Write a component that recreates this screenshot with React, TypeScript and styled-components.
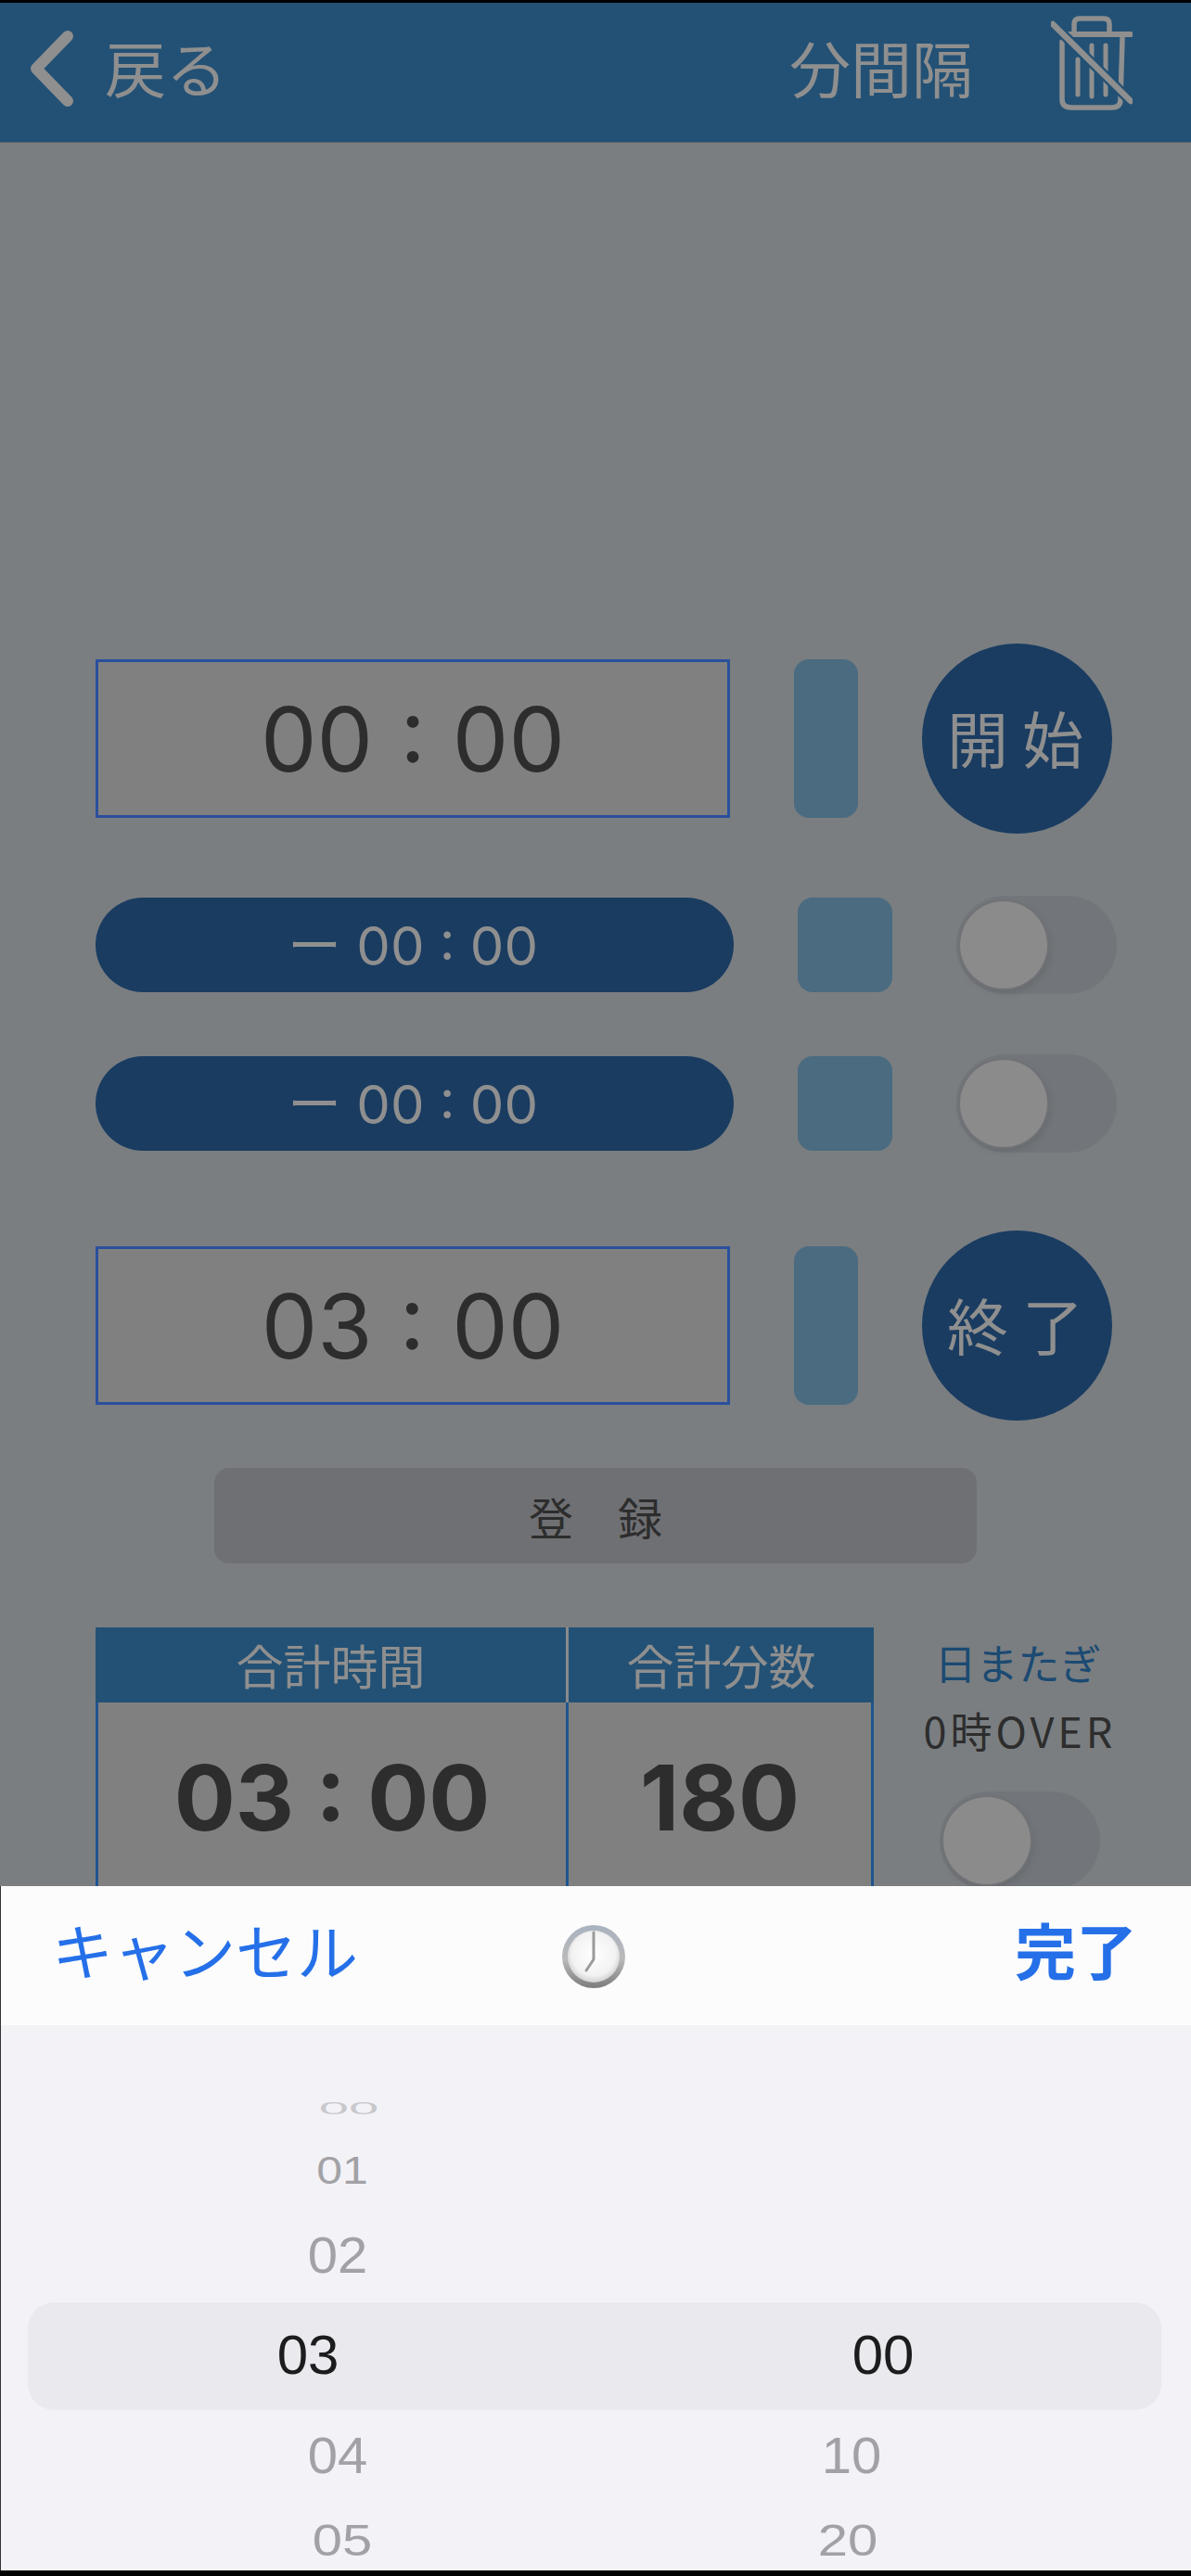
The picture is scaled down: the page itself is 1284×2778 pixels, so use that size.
import React from 'react';
import styled, { createGlobalStyle } from 'styled-components';

const GlobalStyle = createGlobalStyle`
  html, body {
    margin: 0;
    padding: 0;
    background: #000;
  }
`;

const sans = `"Liberation Sans", "Noto Sans CJK JP", sans-serif`;
const digits = `Inter, "Noto Sans CJK JP", sans-serif`;
const jp = `"Noto Sans CJK JP", "Liberation Sans", sans-serif`;

const Screen = styled.div`
  position: relative;
  width: 1284px;
  height: 2778px;
  overflow: hidden;
  background: #7a7e81;
  border-top: 3px solid #000;
  border-bottom: 6px solid #000;
  box-sizing: border-box;
`;

const NavBar = styled.header`
  height: 151px;
  box-sizing: border-box;
  padding: 0 63px 8px 33px;
  display: flex;
  align-items: center;
  justify-content: space-between;
  background: #235175;
  border-bottom: 1px solid #5e6468;
  color: #8f8f8f;
  font-family: ${jp};
`;

const NavGroup = styled.div`
  display: flex;
  align-items: center;
  gap: ${({ $gap }: { $gap: number }) => $gap}px;
`;

const NavText = styled.span`
  margin-bottom: 6px;
  font-size: 66px;
  line-height: 1;
`;

const TrashSlot = styled.div`
  display: flex;
  margin-bottom: 12px;
`;

const Content = styled.main`
  display: flex;
  flex-direction: column;
  padding: 540px 0 0 103px;
`;

const Row = styled.div<{ $top?: number; $gap: number }>`
  display: flex;
  align-items: center;
  gap: ${({ $gap }) => $gap}px;
  margin-top: ${({ $top }) => $top ?? 0}px;
`;

const TimeBox = styled.div`
  width: 684px;
  height: 171px;
  box-sizing: border-box;
  display: flex;
  align-items: center;
  justify-content: center;
  border: 3px solid #2a4f9c;
  background: #808080;
  color: #2d2d2d;
  font-family: ${digits};
  font-size: 96px;
  word-spacing: 2px;
`;

const BarButton = styled.div`
  width: 69px;
  height: 171px;
  border-radius: 16px;
  background: #4a6b80;
`;

const RoundButton = styled.div`
  width: 205px;
  height: 205px;
  box-sizing: border-box;
  padding: 0 4px 6px 0;
  border-radius: 50%;
  display: flex;
  align-items: center;
  justify-content: center;
  background: #1a3c61;
  color: #8f8f8f;
  font-family: ${jp};
  font-size: 66px;
  line-height: 1;
  white-space: pre;
`;

const Pill = styled.div`
  width: 688px;
  height: 102px;
  box-sizing: border-box;
  padding: 0 4px 6px 0;
  border-radius: 51px;
  display: flex;
  align-items: center;
  justify-content: center;
  background: #1a3c61;
  color: #8f8f8f;
  font-family: ${digits};
  font-size: 58px;
  white-space: pre;
`;

const SquareButton = styled.div`
  width: 102px;
  height: 102px;
  border-radius: 16px;
  background: #4a6b80;
`;

const ToggleTrack = styled.div`
  position: relative;
  width: 173px;
  height: 106px;
  border-radius: 53px;
  background: #72767a;
`;

const ToggleThumb = styled.div`
  position: absolute;
  left: 4px;
  top: 6px;
  width: 94px;
  height: 94px;
  border-radius: 50%;
  background: #8b8b8b;
  box-shadow: 0 0 0 2px #717276, 2px 4px 8px rgba(0, 0, 0, 0.12);
`;

const RegisterButton = styled.div`
  width: 822px;
  height: 103px;
  margin: 51px 0 0 128px;
  border-radius: 16px;
  display: flex;
  align-items: center;
  justify-content: center;
  background: #6f7073;
  color: #2d2d2d;
  font-family: ${jp};
  font-size: 48px;
`;

const Summary = styled.section`
  display: flex;
  margin-top: 69px;
`;

const Table = styled.div`
  width: 839px;
  height: 420px;
  display: grid;
  grid-template-columns: 510px 329px;
  grid-template-rows: 81px 1fr;
`;

const TableHead = styled.div`
  display: flex;
  align-items: center;
  justify-content: center;
  padding-bottom: 2px;
  box-sizing: border-box;
  background: #235175;
  border-right: 3px solid #8a8a8a;
  color: #8f8f8f;
  font-family: ${jp};
  font-size: 51px;
  &:nth-child(2) {
    border-right: 0;
  }
`;

const TableValue = styled.div<{ $left?: boolean }>`
  box-sizing: border-box;
  padding-top: 48px;
  display: flex;
  justify-content: center;
  background: #808080;
  border-left: ${({ $left }) => ($left ? '3px solid #1f5590' : '0')};
  border-right: 3px solid #1f5590;
  color: #2d2d2d;
  font-family: ${digits};
  font-size: 98px;
  font-weight: 700;
  line-height: 110px;
`;

const OverColumn = styled.div`
  width: 173px;
  margin-left: 71px;
  display: flex;
  flex-direction: column;
  align-items: center;
  font-family: ${jp};
  font-size: 45px;
  line-height: 64px;
  white-space: nowrap;
`;

const OverTitle = styled.div`
  margin: 6px 4px 0 0;
  color: #1b4a72;
`;

const OverNote = styled.div`
  margin: 9px 0 34px;
  color: #2d2d2d;
  letter-spacing: 4px;
`;

const Sheet = styled.div`
  position: absolute;
  left: 0;
  right: 0;
  top: 2031px;
  bottom: 0;
  overflow: hidden;
  border-left: 1px solid #333;
  background: #f2f2f7;
`;

const SheetBar = styled.div`
  height: 150px;
  box-sizing: border-box;
  padding: 0 58px 16px 55px;
  display: grid;
  grid-template-columns: 1fr auto 1fr;
  align-items: center;
  background: #fcfcfc;
  color: #2570e8;
  font-family: ${jp};
  font-size: 66px;
  line-height: 1;
`;

const BarAction = styled.span<{ $bold?: boolean }>`
  font-weight: ${({ $bold }) => ($bold ? 700 : 400)};
  text-align: ${({ $bold }) => ($bold ? 'right' : 'left')};
`;

const ClockSlot = styled.div`
  display: flex;
  margin: 18px 2px 0 0;
`;

const Picker = styled.div`
  position: relative;
  display: flex;
  padding-top: 60px;
`;

const PickerBand = styled.div`
  position: absolute;
  left: 29px;
  right: 32px;
  top: 299px;
  height: 116px;
  border-radius: 28px;
  background: #e9e9ee;
`;

const Wheel = styled.div`
  position: relative;
  width: 641px;
  flex: none;
`;

const WheelRow = styled.div<{ $height: number }>`
  height: ${({ $height }) => $height}px;
  display: flex;
  align-items: center;
`;

const WheelValue = styled.span<{ $x: number; $size: number; $squash: number; $selected?: boolean; $fade?: boolean }>`
  width: 120px;
  margin-left: ${({ $x }) => $x - 60}px;
  text-align: center;
  font-family: ${sans};
  font-size: ${({ $size }) => $size}px;
  line-height: 1;
  transform: scaleY(${({ $squash }) => $squash});
  color: ${({ $selected, $fade }) => ($selected ? '#1c1c1e' : $fade ? '#c8c8cc' : '#a2a2a6')};
`;

const ChevronIcon = () => (
  <svg width="46" height="82" viewBox="0 0 46 82" fill="none">
    <path d="M40 6 L6 41 L40 76" stroke="#8f8f8f" strokeWidth="12" strokeLinecap="round" strokeLinejoin="round" />
  </svg>
);

const TrashIcon = () => (
  <svg width="88" height="102" viewBox="0 0 88 102" fill="none" stroke="#8f8f8f" strokeWidth="5.5" strokeLinecap="round">
    <path d="M25 20 V9 Q25 3 31 3 H57 Q63 3 63 9 V20" />
    <path d="M10 20 H86" strokeWidth="6" />
    <path d="M12 28 V90 Q12 99 22 99 H66 Q75 99 75 90 L77 24" />
    <path d="M29 47 V85 M44 32 V87 M59 32 V85" strokeWidth="5" />
    <path d="M2 9 L86 92" strokeWidth="11" stroke="#235175" strokeLinecap="butt" />
    <path d="M2 9 L86 92" strokeWidth="6.5" />
  </svg>
);

const ClockIcon = () => (
  <svg width="70" height="70" viewBox="0 0 70 70">
    <defs>
      <linearGradient id="clockRim" x1="0" y1="0" x2="0" y2="1">
        <stop offset="0" stopColor="#a9b2c0" />
        <stop offset="0.55" stopColor="#b9b9b9" />
        <stop offset="1" stopColor="#7c7c7c" />
      </linearGradient>
      <radialGradient id="clockFace" cx="0.5" cy="0.45" r="0.6">
        <stop offset="0" stopColor="#ffffff" />
        <stop offset="0.7" stopColor="#f2f2f2" />
        <stop offset="1" stopColor="#c4c4c4" />
      </radialGradient>
    </defs>
    <circle cx="35" cy="35" r="34" fill="url(#clockRim)" />
    <circle cx="35" cy="35" r="28" fill="url(#clockFace)" />
    <path d="M35 9 V38 L27 50" fill="none" stroke="#9a9a9a" strokeWidth="3" strokeLinecap="round" strokeLinejoin="round" />
  </svg>
);

const Toggle = () => (
  <ToggleTrack>
    <ToggleThumb />
  </ToggleTrack>
);

const wheelRows = [
  { height: 60, hour: '00', hourX: 375, minute: '', minuteX: 0, size: 58, squash: 0.32, fade: true },
  { height: 72, hour: '01', hourX: 368, minute: '', minuteX: 0, size: 50, squash: 0.86 },
  { height: 112, hour: '02', hourX: 363, minute: '', minuteX: 0, size: 58, squash: 0.95 },
  { height: 104, hour: '03', hourX: 331, minute: '00', minuteX: 951, size: 60, squash: 1, selected: true },
  { height: 112, hour: '04', hourX: 363, minute: '10', minuteX: 917, size: 58, squash: 0.95 },
  { height: 72, hour: '05', hourX: 368, minute: '20', minuteX: 913, size: 58, squash: 0.82 },
];

export default function App() {
  return (
    <>
      <GlobalStyle />
      <Screen>
        <NavBar>
          <NavGroup $gap={34}>
            <ChevronIcon />
            <NavText>戻る</NavText>
          </NavGroup>
          <NavGroup $gap={84}>
            <NavText>分間隔</NavText>
            <TrashSlot>
              <TrashIcon />
            </TrashSlot>
          </NavGroup>
        </NavBar>

        <Content>
          <Row $gap={69}>
            <TimeBox>00 : 00</TimeBox>
            <BarButton />
            <RoundButton>開 始</RoundButton>
          </Row>
          <Row $top={67} $gap={69}>
            <Pill>ー 00 : 00</Pill>
            <SquareButton />
            <Toggle />
          </Row>
          <Row $top={65} $gap={69}>
            <Pill>ー 00 : 00</Pill>
            <SquareButton />
            <Toggle />
          </Row>
          <Row $top={84} $gap={69}>
            <TimeBox>03 : 00</TimeBox>
            <BarButton />
            <RoundButton>終 了</RoundButton>
          </Row>
          <RegisterButton>登　録</RegisterButton>
          <Summary>
            <Table>
              <TableHead>合計時間</TableHead>
              <TableHead>合計分数</TableHead>
              <TableValue $left>03 : 00</TableValue>
              <TableValue>180</TableValue>
            </Table>
            <OverColumn>
              <OverTitle>日またぎ</OverTitle>
              <OverNote>0時OVER</OverNote>
              <Toggle />
            </OverColumn>
          </Summary>
        </Content>

        <Sheet>
          <SheetBar>
            <BarAction>キャンセル</BarAction>
            <ClockSlot>
              <ClockIcon />
            </ClockSlot>
            <BarAction $bold>完了</BarAction>
          </SheetBar>
          <Picker>
            <PickerBand />
            <Wheel>
              {wheelRows.map((row) => (
                <WheelRow key={row.hour} $height={row.height}>
                  <WheelValue $x={row.hourX} $size={row.size} $squash={row.squash} $selected={row.selected} $fade={row.fade}>
                    {row.hour}
                  </WheelValue>
                </WheelRow>
              ))}
            </Wheel>
            <Wheel>
              {wheelRows.map((row) => (
                <WheelRow key={row.hour} $height={row.height}>
                  {row.minute && (
                    <WheelValue $x={row.minuteX - 641} $size={row.size} $squash={row.squash} $selected={row.selected}>
                      {row.minute}
                    </WheelValue>
                  )}
                </WheelRow>
              ))}
            </Wheel>
          </Picker>
        </Sheet>
      </Screen>
    </>
  );
}
